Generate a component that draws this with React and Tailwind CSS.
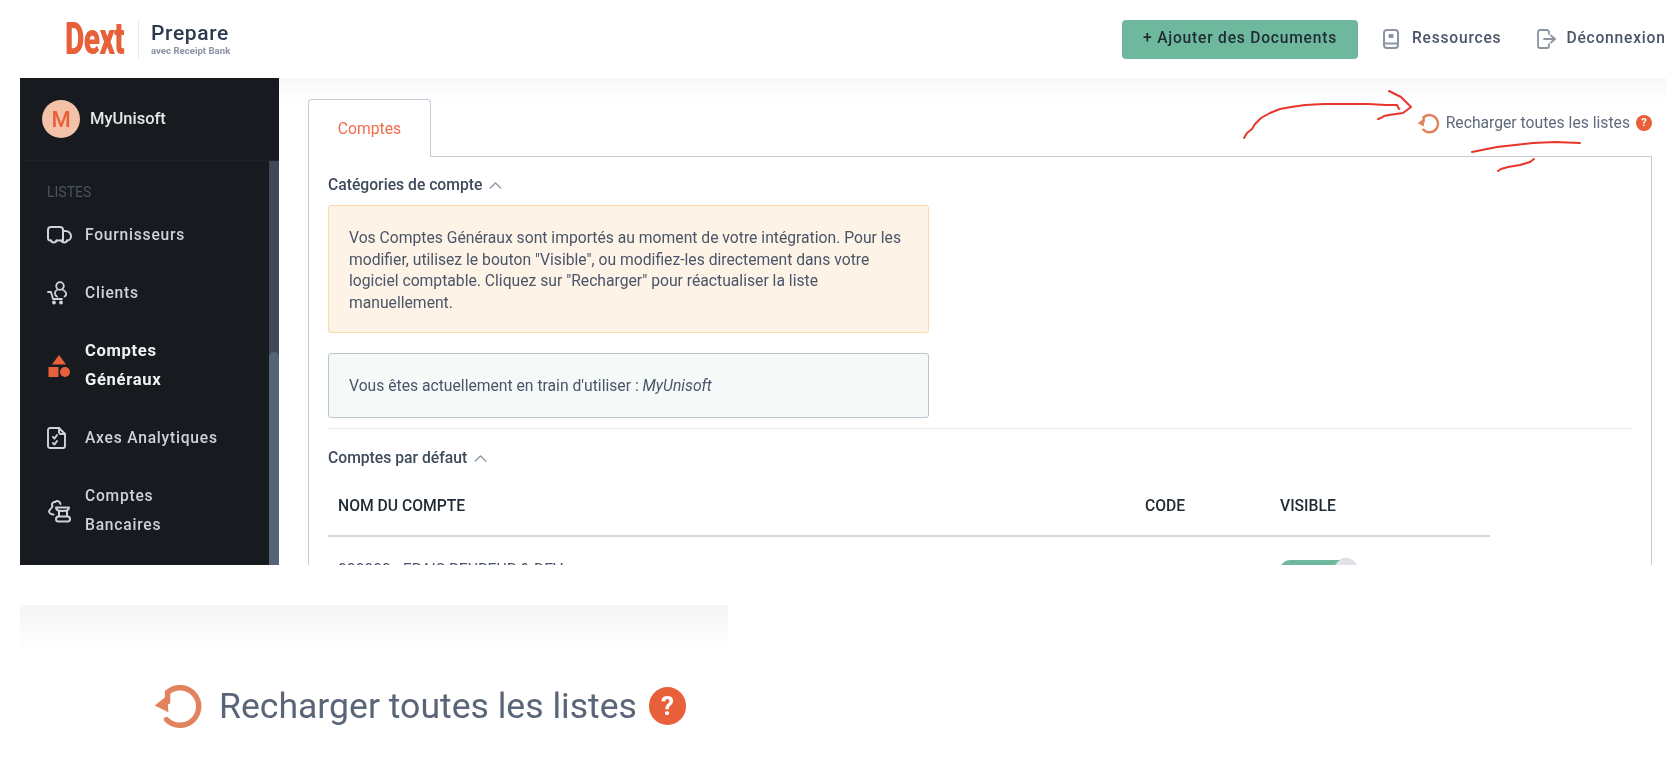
import { ChevronUp } from 'lucide-react'

const font = { fontFamily: 'Roboto, "Liberation Sans", sans-serif' }

function NavItem({ icon, lines, active }) {
  return (
    <div className="flex items-center pl-[27px] py-[14.5px]">
      <div className="w-[38px] shrink-0 flex">{icon}</div>
      <div className={`leading-[29px] ${active ? 'text-[16.6px] tracking-[0.04em] font-bold text-[#f1f2f4] -translate-y-[1.5px]' : 'text-[15.6px] tracking-[0.05em] font-medium text-[#cfd3d9]'}`}>
        {lines.map(l => <div key={l}>{l}</div>)}
      </div>
    </div>
  )
}

function TruckIcon() {
  return (
    <svg width="25" height="18" viewBox="0 0 25 18" fill="none" stroke="#d0d3d9" strokeWidth="2" strokeLinecap="round" strokeLinejoin="round">
      <path d="M4 14.500H3.500a2.500 2.500 0 0 1-2.500-2.500V4a3 3 0 0 1 3-3h9a3 3 0 0 1 3 3v10.500H9.500" />
      <path d="M16 5h2.500c3 0 5.500 2.500 5.500 5s-1.500 4.500-3.500 4.500H20" />
      <path d="M4 14.500c.5 2.500 5 2.500 5.500 0M14.500 14.500c.5 2.500 5 2.500 5.500 0" />
    </svg>
  )
}

function CartUserIcon() {
  return (
    <svg width="22" height="24" viewBox="0 0 22 24" fill="none" stroke="#d0d3d9" strokeWidth="1.8" strokeLinecap="round" strokeLinejoin="round">
      <circle cx="13" cy="5" r="3.800" />
      <path d="M10 9c-2.500 1-3 5 0 6.500M16 9c3 1 4.500 5 1.500 6.500" />
      <path d="M1 11h3l2 7h9" />
      <circle cx="7" cy="21.500" r="1" />
      <circle cx="14" cy="21.500" r="1" />
    </svg>
  )
}

function ShapesIcon() {
  return (
    <svg width="24" height="24" viewBox="0 0 24 24" fill="#e8603a">
      <path d="M12 1l7 9.500H5z" />
      <rect x="1.500" y="13" width="10" height="10" />
      <circle cx="18" cy="18" r="5" />
    </svg>
  )
}

function FileCheckIcon() {
  return (
    <svg width="20" height="22" viewBox="0 0 20 22" fill="none" stroke="#d0d3d9" strokeWidth="1.9" strokeLinecap="round" strokeLinejoin="round">
      <path d="M3 1h9l6 6v12a2 2 0 0 1-2 2H3a2 2 0 0 1-2-2V3a2 2 0 0 1 2-2z" />
      <path d="M12 1v4a2 2 0 0 0 2 2h4" />
      <path d="M6 10l1.500 1.500L10 8M6 16l1.500 1.500L10 14" />
    </svg>
  )
}

function BankIcon() {
  return (
    <svg width="24" height="24" viewBox="0 0 24 24" fill="none" stroke="#d0d3d9" strokeWidth="2" strokeLinecap="round" strokeLinejoin="round">
      <path d="M8 3C5 3 4.500 5 5.500 7.500L2 12c0 2 2 3.500 4.500 3.500" />
      <path d="M8 3c2.500-2 5-.5 5.500 2" />
      <path d="M9 8.500h13c0 2-2 3.500-6.500 3.500S9 10.500 9 8.500z" />
      <rect x="9" y="17.500" width="14" height="5" rx="2.500" />
      <path d="M12 12v5M20 12v5" />
    </svg>
  )
}

function ReloadIcon({ size }) {
  return (
    <svg width={size} height={size} viewBox="0 0 24 24" fill="none" stroke="#e2835f" strokeWidth="2.600" strokeLinecap="round" strokeLinejoin="round">
      <path d="M7 5.500A9 9 0 1 1 6.500 18.500" />
      <path d="M7 5.500V10" />
      <path d="M0.800 11.800l6-4.800.6 8z" fill="#e2835f" stroke="none" />
    </svg>
  )
}

function HelpBadge({ className }) {
  return (
    <span className={`rounded-full bg-[#e8603a] text-white font-bold flex items-center justify-center ${className}`}>?</span>
  )
}

// red hand-drawn marks on top of the screenshot
function Scribbles() {
  return (
    <svg className="absolute left-0 top-0 pointer-events-none" width="1666" height="200" viewBox="0 0 1666 200" fill="none" stroke="#e8362c" strokeWidth="2" strokeLinecap="round" strokeLinejoin="round">
      <path d="M1244 138l3-5 5-4 3-5 6-6 9-5 10-4 11-2 14-2 19-1 22 0 22 0 18 1 11 0 2 4" />
      <path d="M1389 91l6 3 6 3 5 5 5 5-4 3-4 3-7 1-7 1-5 1-3 2-3 1" />
      <path d="M1472 152l10-2 15-3 18-2 18-2 22-1 25 1" />
      <path d="M1498 171l3-2 7-2 12-2 10-3 4-3" />
    </svg>
  )
}

export default function App() {
  return (
    <div style={font} className="relative w-[1666px] h-[766px] overflow-hidden bg-white flex flex-col blur-[0.4px]">
      <header className="h-[78px] shrink-0 flex items-center">
        <div className="w-[65px] shrink-0" />
        <div className="w-[73px] shrink-0 text-[44px] leading-none font-black text-[#e8603a] origin-left scale-x-[0.68] tracking-[-0.02em]">Dext</div>
        <div className="w-px h-[37px] bg-[#e5e7eb] shrink-0" />
        <div className="ml-[12px] w-[84px] shrink-0">
          <div className="text-[21px] leading-[23px] font-medium tracking-[0.03em] text-[#2d3a50]">Prepare</div>
          <div className="text-[9.600px] leading-[12px] font-bold text-[#8a93a3] whitespace-nowrap">avec Receipt Bank</div>
        </div>
        <div className="ml-[887px] w-[236px] h-[39px] shrink-0 rounded bg-[#6eb89d] flex items-center justify-center text-[15.6px] font-medium tracking-[0.05em] text-[#1f2a33]">
          + Ajouter des Documents
        </div>
        <svg className="ml-[25px] shrink-0" width="16" height="20" viewBox="0 0 16 20" fill="none" stroke="#8a94a3" strokeWidth="2" strokeLinejoin="round">
          <path d="M4 1h8a3 3 0 0 1 3 3v12a3 3 0 0 1-3 3H4a3 3 0 0 1-3-3V4a3 3 0 0 1 3-3z" />
          <path d="M1 14.500h14" />
          <path d="M6 5.500h4v3H6z" fill="#8a94a3" strokeWidth="1" />
        </svg>
        <span className="ml-[13px] text-[15.6px] font-medium tracking-[0.05em] text-[#4a5568] whitespace-nowrap">Ressources</span>
        <svg className="ml-[36px] shrink-0" width="19" height="20" viewBox="0 0 19 20" fill="none" stroke="#8a94a3" strokeWidth="1.8" strokeLinecap="round" strokeLinejoin="round">
          <path d="M12 5V3a2 2 0 0 0-2-2H3a2 2 0 0 0-2 2v14a2 2 0 0 0 2 2h7a2 2 0 0 0 2-2v-2" />
          <path d="M7 10h11M14 6.500l4 3.500-4 3.500" />
        </svg>
        <span className="ml-[10px] text-[15.6px] font-medium tracking-[0.05em] text-[#4a5568] whitespace-nowrap">Déconnexion</span>
      </header>

      <div className="h-[487px] shrink-0 flex overflow-hidden pl-[20px]">
        <aside className="w-[259px] shrink-0 bg-[#171a1f] flex flex-col">
          <div className="h-[83px] shrink-0 flex items-center pl-[22px] gap-[10px] border-b border-[#1e2228]">
            <div className="w-[38px] h-[38px] rounded-full bg-[#f4c2a8] flex items-center justify-center text-[22px] font-medium text-[#e8603a]">M</div>
            <span className="text-[16.5px] font-medium text-[#e4e6ea]">MyUnisoft</span>
          </div>
          <div className="flex-1 flex min-h-0">
            <div className="flex-1 overflow-hidden">
              <div className="pl-[27px] pt-[21px] pb-[2px] text-[14px] leading-[20px] text-[#4a5464]">LISTES</div>
              <div className="mt-[2px]">
                <NavItem icon={<TruckIcon />} lines={['Fournisseurs']} />
                <NavItem icon={<CartUserIcon />} lines={['Clients']} />
                <NavItem icon={<ShapesIcon />} lines={['Comptes', 'Généraux']} active />
                <NavItem icon={<FileCheckIcon />} lines={['Axes Analytiques']} />
                <NavItem icon={<BankIcon />} lines={['Comptes', 'Bancaires']} />
              </div>
            </div>
            <div className="w-[10px] shrink-0 bg-[#3f4956] flex flex-col">
              <div className="h-[191px] shrink-0" />
              <div className="flex-1 bg-[#566275] rounded-t-md" />
            </div>
          </div>
        </aside>

        <main className="flex-1 min-w-0 bg-gradient-to-b from-[#f7f7f7] to-white to-[5%] pl-[29px] pr-[14px] pt-[21px]">
          <div className="flex justify-between h-[58px]">
            <div className="w-[123px] h-[58px] border border-b-0 border-[#c5ccd8] rounded-t bg-white flex items-center justify-center text-[15.7px] text-[#f26b4a] relative z-10">Comptes</div>
            <div className="flex items-center gap-[6px] h-[48px] text-[15.7px] text-[#5f6b7c]">
              <ReloadIcon size={23} />
              <span>Recharger toutes les listes</span>
              <HelpBadge className="w-[16px] h-[16px] text-[11px]" />
            </div>
          </div>
          <div className="-mt-px border border-[#c5ccd8] px-[19px] pt-[17px] h-[500px]">
            <div className="flex items-center gap-[3px] text-[15.7px] leading-[22px] font-medium text-[#3f4a5a]">
              Catégories de compte <ChevronUp size={21} strokeWidth={1.5} className="text-[#7f8a99]" />
            </div>
            <div className="mt-[9px] w-[601px] h-[128px] border border-[#fbd9a8] rounded-[3px] bg-[#fdf3e7] px-[20px] pt-[21px] text-[15.7px] leading-[21.6px] text-[#4a5568]">
              Vos Comptes Généraux sont importés au moment de votre intégration. Pour les modifier, utilisez le bouton "Visible", ou modifiez-les directement dans votre logiciel comptable. Cliquez sur "Recharger" pour réactualiser la liste manuellement.
            </div>
            <div className="mt-[20px] w-[601px] h-[65px] border border-[#bcc4cf] rounded-[3px] bg-[#f5faf9] px-[20px] pt-[1px] flex items-center text-[15.7px] text-[#4a5568]">
              <span>Vous êtes actuellement en train d'utiliser : <em>MyUnisoft</em></span>
            </div>
            <div className="mt-[10px] h-px bg-[#e4e7eb]" />
            <div className="mt-[18px] flex items-center gap-[3px] text-[15.7px] leading-[22px] font-medium text-[#3f4a5a]">
              Comptes par défaut <ChevronUp size={21} strokeWidth={1.5} className="text-[#7f8a99]" />
            </div>
            <div className="mt-[8px] w-[1162px] h-[60px] border-b-2 border-[#d5d9df] flex items-center text-[15.7px] font-medium text-[#1f2a33]">
              <div className="w-[817px] pl-[10px]">NOM DU COMPTE</div>
              <div className="w-[135px]">CODE</div>
              <div>VISIBLE</div>
            </div>
            <div className="h-[66px] flex items-center text-[15.7px] text-[#4a5568]">
              <div className="w-[817px] pl-[10px]">000000 - FRAIS BEUREUR & DEV</div>
              <div className="w-[135px]" />
              <div className="w-[78px] h-[24px] relative flex items-center">
                <div className="w-full h-[20px] rounded-full bg-[#6eb89d]" />
                <div className="absolute right-0 top-0 w-[24px] h-[24px] rounded-full bg-[#e0e3e8] border border-[#d5d9df]" />
              </div>
            </div>
          </div>
        </main>
      </div>

      <div className="mt-[40px] ml-[20px] w-[708px] flex-1 bg-gradient-to-b from-[#f5f5f5] to-white to-[30%] pt-[76px] pl-[133px]">
        <div className="flex items-center text-[35.6px] leading-[48px] text-[#5a6678] blur-[0.5px]">
          <ReloadIcon size={50} />
          <span className="ml-[16px] whitespace-nowrap">Recharger toutes les listes</span>
          <HelpBadge className="ml-[12px] w-[37px] h-[38px] shrink-0 text-[26px]" />
        </div>
      </div>

      <Scribbles />
    </div>
  )
}
